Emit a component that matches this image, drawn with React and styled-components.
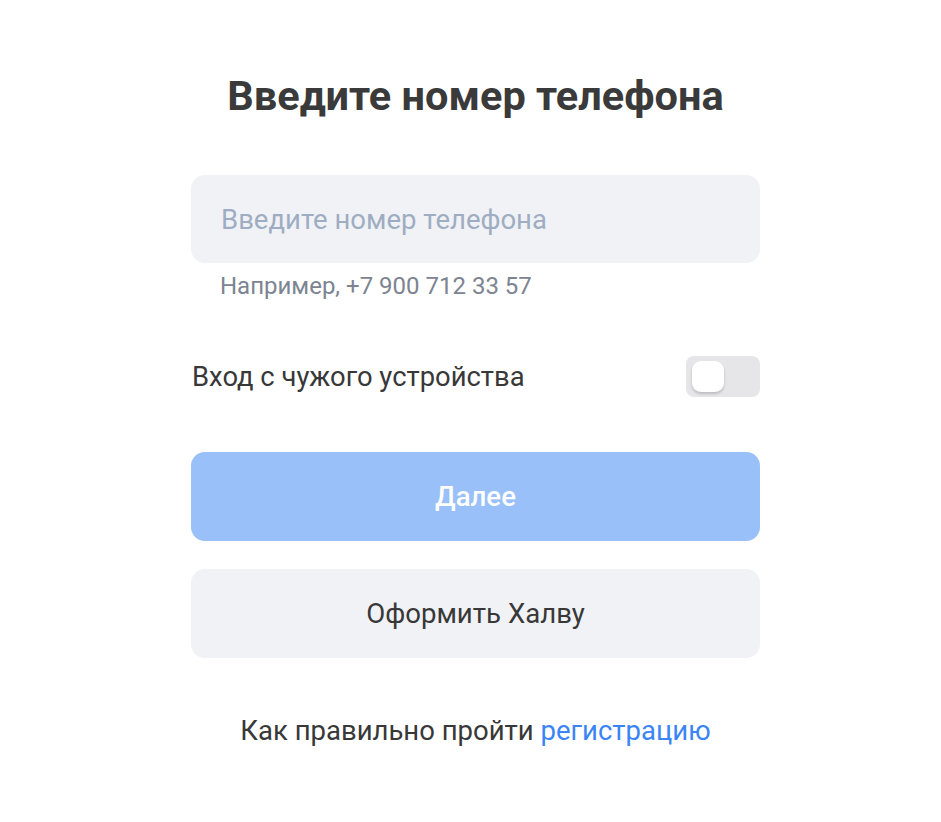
import React, { useState } from "react";
import styled, { createGlobalStyle } from "styled-components";

const Global = createGlobalStyle`
  html, body { margin: 0; padding: 0; background: #ffffff; }
  body { font-family: Roboto, "Noto Sans", Arial, sans-serif; }
  * { box-sizing: border-box; }
`;

const Page = styled.div`
  display: flex;
  justify-content: center;
  padding: 72px 0 40px 10px;
`;

const Form = styled.div`
  width: 569px;
  display: flex;
  flex-direction: column;
`;

const Title = styled.h1`
  margin: 0;
  text-align: center;
  font-size: 41.5px;
  line-height: 48px;
  font-weight: 700;
  color: #3a3a3a;
`;

const InputBox = styled.input`
  margin-top: 55px;
  height: 88px;
  width: 100%;
  border: none;
  outline: none;
  border-radius: 14px;
  background: #f1f2f6;
  padding: 0 30px;
  font-family: inherit;
  font-size: 27.5px;
  color: #333;
  &::placeholder { color: #9eadc2; }
`;

const Hint = styled.div`
  margin-top: 9px;
  padding-left: 29px;
  font-size: 24px;
  line-height: 28px;
  color: #7c8491;
`;

const ToggleRow = styled.label`
  margin-top: 56px;
  display: flex;
  align-items: center;
  justify-content: space-between;
  cursor: pointer;
`;

const ToggleLabel = styled.span`
  font-size: 27.4px;
  color: #383838;
  padding-left: 1px;
`;

const Track = styled.span`
  width: 74px;
  height: 41px;
  border-radius: 8px;
  background: #e6e6e8;
  display: flex;
  align-items: center;
  padding: 0 6px;
  justify-content: ${(p) => (p.$on ? "flex-end" : "flex-start")};
`;

const Knob = styled.span`
  width: 32px;
  height: 31px;
  border-radius: 9px;
  background: #ffffff;
  box-shadow: 0 2px 3px rgba(0, 0, 0, 0.18);
`;

const Button = styled.button`
  width: 100%;
  height: 89px;
  border: none;
  border-radius: 14px;
  font-family: inherit;
  font-size: 27.6px;
  font-weight: ${(p) => (p.$primary ? 500 : 400)};
  background: ${(p) => (p.$primary ? "#99c0f8" : "#f1f2f6")};
  color: ${(p) => (p.$primary ? "#ffffff" : "#383838")};
  margin-top: ${(p) => p.$mt}px;
  cursor: pointer;
`;

const Footer = styled.p`
  margin: 56px 0 0;
  text-align: center;
  font-size: 27.5px;
  color: #383838;
`;

const Link = styled.a`
  color: #3b84f5;
  text-decoration: none;
`;

export default function App() {
  const [on, setOn] = useState(false);
  return (
    <>
      <Global />
      <Page>
        <Form>
          <Title>Введите номер телефона</Title>
          <InputBox placeholder="Введите номер телефона" />
          <Hint>Например, +7 900 712 33 57</Hint>
          <ToggleRow onClick={() => setOn(!on)}>
            <ToggleLabel>Вход с чужого устройства</ToggleLabel>
            <Track $on={on}>
              <Knob />
            </Track>
          </ToggleRow>
          <Button $primary $mt={55}>Далее</Button>
          <Button $mt={28}>Оформить Халву</Button>
          <Footer>
            Как правильно пройти <Link href="#">регистрацию</Link>
          </Footer>
        </Form>
      </Page>
    </>
  );
}
